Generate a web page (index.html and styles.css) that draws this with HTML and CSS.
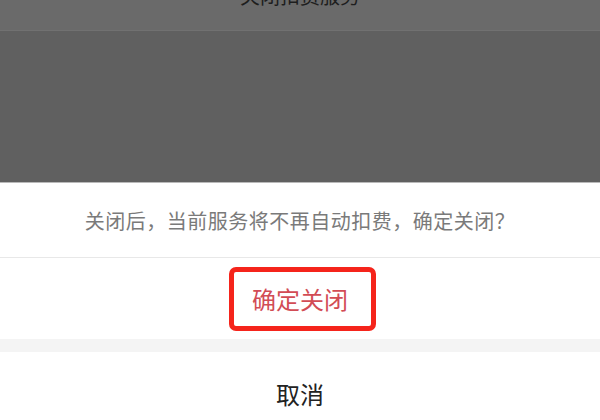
FILE: index.html
```html
<!DOCTYPE html>
<html lang="zh-CN">
<head>
<meta charset="utf-8">
<title>关闭扣费服务</title>
<link rel="stylesheet" href="styles.css">
</head>
<body>
<div class="page">
  <div class="topbar"><span class="title">关闭扣费服务</span></div>
  <div class="mask"></div>
  <div class="sheet">
    <div class="msg">关闭后，当前服务将不再自动扣费，确定关闭？</div>
    <div class="confirm-row">
      <div class="confirm-box">确定关闭</div>
    </div>
    <div class="gap"></div>
    <div class="cancel">取消</div>
  </div>
</div>
</body>
</html>
```
FILE: styles.css
```css
html, body {
  margin: 0;
  padding: 0;
}
body {
  width: 600px;
  height: 420px;
  overflow: hidden;
  background: #606060;
  font-family: "Noto Sans CJK SC", "Noto Sans", sans-serif;
}
.page {
  display: flex;
  flex-direction: column;
  height: 420px;
}
.topbar {
  height: 30px;
  background: #6a6a6a;
  border-bottom: 1px solid #717171;
  display: flex;
  justify-content: center;
  overflow: hidden;
}
.title {
  font-size: 20px;
  line-height: 20px;
  height: 20px;
  margin-top: -14px;
  color: #1e1e1e;
}
.mask {
  height: 151px;
  background: #606060;
}
.sheet {
  flex: 1;
  background: #fff;
  border-top: 1px solid #b9b9b9;
  display: flex;
  flex-direction: column;
}
.msg {
  height: 75px;
  box-sizing: border-box;
  padding-top: 26px;
  text-align: center;
  font-size: 20px;
  line-height: 24px;
  letter-spacing: 0.5px;
  color: #7a7a7a;
  border-bottom: 1px solid #e8e8e8;
}
.confirm-row {
  height: 81px;
  display: flex;
  justify-content: center;
  align-items: center;
  padding-left: 5px;
  box-sizing: border-box;
}
.confirm-box {
  width: 147px;
  height: 64px;
  box-sizing: border-box;
  border: 5px solid #f5241b;
  border-radius: 7px;
  display: flex;
  align-items: center;
  justify-content: center;
  padding-right: 5px;
  font-size: 24px;
  color: #d24c55;
}
.gap {
  height: 13px;
  background: #f4f4f4;
}
.cancel {
  flex: 1;
  box-sizing: border-box;
  padding-top: 30px;
  text-align: center;
  font-size: 24px;
  line-height: 24px;
  color: #222;
}
```
